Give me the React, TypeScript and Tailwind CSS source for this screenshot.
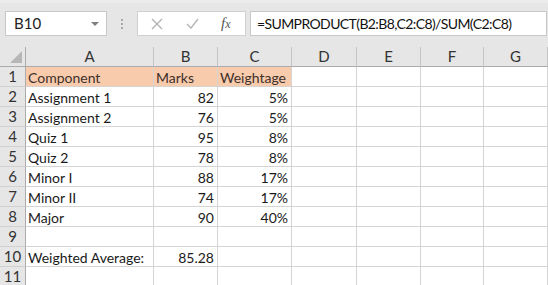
import React from "react";

const cols = [
  { l: "A", w: "w-[128px]" },
  { l: "B", w: "w-[64px]" },
  { l: "C", w: "w-[74px]" },
  { l: "D", w: "w-[65px]" },
  { l: "E", w: "w-[64px]" },
  { l: "F", w: "w-[63px]" },
  { l: "G", w: "w-[64px]" },
];

type Cell = { t?: string; r?: boolean };
const rows: Cell[][] = [
  [{ t: "Component" }, { t: "Marks" }, { t: "Weightage" }],
  [{ t: "Assignment 1" }, { t: "82", r: true }, { t: "5%", r: true }],
  [{ t: "Assignment 2" }, { t: "76", r: true }, { t: "5%", r: true }],
  [{ t: "Quiz 1" }, { t: "95", r: true }, { t: "8%", r: true }],
  [{ t: "Quiz 2" }, { t: "78", r: true }, { t: "8%", r: true }],
  [{ t: "Minor I" }, { t: "88", r: true }, { t: "17%", r: true }],
  [{ t: "Minor II" }, { t: "74", r: true }, { t: "17%", r: true }],
  [{ t: "Major" }, { t: "90", r: true }, { t: "40%", r: true }],
  [],
  [{ t: "Weighted Average:" }, { t: "85.28", r: true }],
  [],
];

const font = { fontFamily: "Lato, 'Liberation Sans', sans-serif" };

export default function App() {
  return (
    <div
      className="w-[548px] h-[285px] overflow-hidden bg-[#e6e6e6] text-[14px] text-[#1a1a1a]"
      style={font}
    >
      {/* toolbar */}
      <div className="h-[47px] border-t-[3px] border-[#ececec] pt-[8px] flex items-start">
        <div className="ml-[5px] w-[102px] h-[25px] bg-white border border-[#c8c8c8] flex items-center justify-between pl-[8px] pr-[6px]">
          <span className="text-[#222] text-[15px]">B10</span>
          <svg width="10" height="6" viewBox="0 0 10 6">
            <path d="M1 1 L9 1 L5 5 Z" fill="#808080" />
          </svg>
        </div>
        <div className="w-[30px] h-[25px] flex flex-col items-center justify-center gap-[2px]">
          <div className="w-[2px] h-[2px] bg-[#a8a8a8]" />
          <div className="w-[2px] h-[2px] bg-[#a8a8a8]" />
          <div className="w-[2px] h-[2px] bg-[#a8a8a8]" />
        </div>
        <div className="w-[109px] h-[25px] bg-white border border-[#d0d0d0] flex items-center">
          <svg className="ml-[13px]" width="12" height="12" viewBox="0 0 12 12">
            <path d="M1 1 L11 11 M11 1 L1 11" stroke="#b0b0b0" strokeWidth="1.3" />
          </svg>
          <svg className="ml-[23px]" width="13" height="11" viewBox="0 0 13 11">
            <path d="M1 6 L5 10 L12 1" stroke="#b8b8b8" strokeWidth="1.5" fill="none" />
          </svg>
          <span
            className="ml-[22px] text-[15px] italic text-[#555] leading-none"
            style={{ fontFamily: "'Liberation Serif', serif" }}
          >
            f<span className="text-[12px]">x</span>
          </span>
        </div>
        <div className="ml-[4px] w-[297px] h-[25px] bg-white border border-[#c8c8c8] flex items-center pl-[6px] text-[#111] text-[14px] tracking-[-0.6px] whitespace-nowrap overflow-hidden">
          =SUMPRODUCT(B2:B8,C2:C8)/SUM(C2:C8)
        </div>
      </div>

      {/* grid */}
      <div className="flex flex-col">
        {/* header row */}
        <div className="flex h-[20px]">
          <div className="w-[26px] h-[20px] border-r border-b border-[#ababab] bg-[#e6e6e6] relative">
            <svg className="absolute right-[3px] bottom-[3px]" width="12" height="12" viewBox="0 0 12 12">
              <path d="M12 0 L12 12 L0 12 Z" fill="#b7b7b7" />
            </svg>
          </div>
          {cols.map((c) => (
            <div
              key={c.l}
              className={`${c.w} h-[20px] border-r border-b border-r-[#c4c4c4] border-b-[#ababab] bg-[#e6e6e6] flex items-center justify-center text-[#333] text-[15px]`}
            >
              {c.l}
            </div>
          ))}
        </div>
        {rows.map((row, i) => (
          <div key={i} className="flex h-[20px]">
            <div className="w-[26px] h-[20px] border-r border-b border-r-[#ababab] border-b-[#d0d0d0] bg-[#e6e6e6] flex items-center justify-center text-[#333] text-[15px]">
              {i + 1}
            </div>
            {cols.map((c, j) => {
              const cell = row[j];
              const orange = i === 0 && j < 3;
              return (
                <div
                  key={c.l}
                  className={`${c.w} h-[20px] border-r border-b border-[#d4d4d4] flex items-center pt-[1px] whitespace-nowrap overflow-visible ${
                    orange ? "bg-[#f8cbad] text-[#3e302a]" : "bg-white"
                  } ${cell?.r ? "justify-end pr-[3px]" : "pl-[2px]"}`}
                >
                  {cell?.t}
                </div>
              );
            })}
          </div>
        ))}
      </div>
    </div>
  );
}
